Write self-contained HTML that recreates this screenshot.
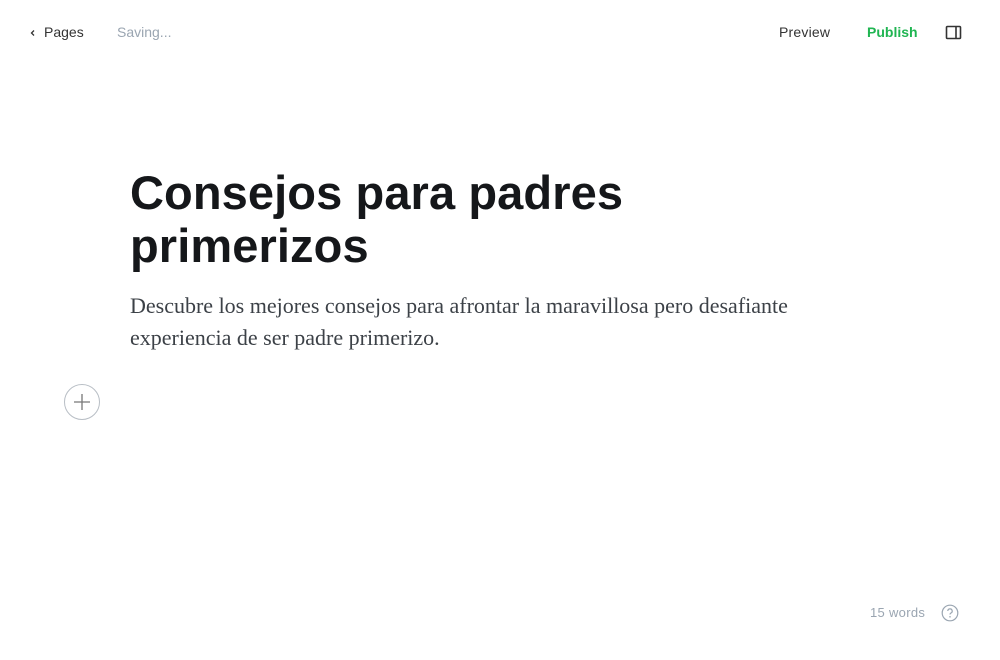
<!DOCTYPE html>
<html><head><meta charset="utf-8"><style>
*{margin:0;padding:0;box-sizing:border-box}
body{width:1000px;height:660px;background:#fff;position:relative;font-family:"Liberation Sans",sans-serif;overflow:hidden}
.a{position:absolute;white-space:nowrap}
</style></head><body>
<svg class="a" style="left:29px;top:28px" width="8" height="10" viewBox="0 0 8 10"><path d="M5 2.5 L2.5 5 L5 7.5" stroke="#333" stroke-width="1.3" fill="none"/></svg>
<div class="a" style="left:44px;top:24px;font-size:14px;color:#333">Pages</div>
<div class="a" style="left:117px;top:24px;font-size:14px;color:#9aa5b1">Saving...</div>
<div class="a" style="left:779px;top:24px;font-size:14px;color:#333;letter-spacing:0.2px">Preview</div>
<div class="a" style="left:867px;top:24px;font-size:14px;font-weight:bold;color:#20b552">Publish</div>
<svg class="a" style="left:945px;top:24px" width="18" height="18" viewBox="0 0 18 18"><rect x="1.5" y="2.5" width="14" height="12" rx="1" stroke="#333" stroke-width="1.6" fill="none"/><line x1="11" y1="2.5" x2="11" y2="14.5" stroke="#333" stroke-width="1.6"/></svg>
<div class="a" style="left:130px;top:166px;font-size:47px;line-height:53px;font-weight:bold;color:#15171a;letter-spacing:0.1px">Consejos para padres<br>primerizos</div>
<div class="a" style="left:130px;top:290px;font-size:22px;line-height:32px;font-family:'Liberation Serif',serif;color:#3c4147">Descubre los mejores consejos para afrontar la maravillosa pero desafiante<br>experiencia de ser padre primerizo.</div>
<svg class="a" style="left:64px;top:384px" width="36" height="36" viewBox="0 0 36 36"><circle cx="18" cy="18" r="17.5" stroke="#b8bec5" fill="none"/><path d="M18 10v16M10 18h16" stroke="#777" stroke-width="1.3"/></svg>
<div class="a" style="left:870px;top:605px;font-size:13px;color:#9aa5b1;letter-spacing:0.3px">15 words</div>
<svg class="a" style="left:941px;top:604px" width="18" height="18" viewBox="0 0 18 18"><circle cx="9" cy="9" r="7.8" stroke="#9aa5b1" stroke-width="1.2" fill="none"/><path d="M6.8 7a2.2 2.2 0 1 1 3 2.1c-.6.3-.8.7-.8 1.4" stroke="#9aa5b1" stroke-width="1.2" fill="none"/><circle cx="9" cy="12.8" r=".8" fill="#9aa5b1"/></svg>
</body></html>
